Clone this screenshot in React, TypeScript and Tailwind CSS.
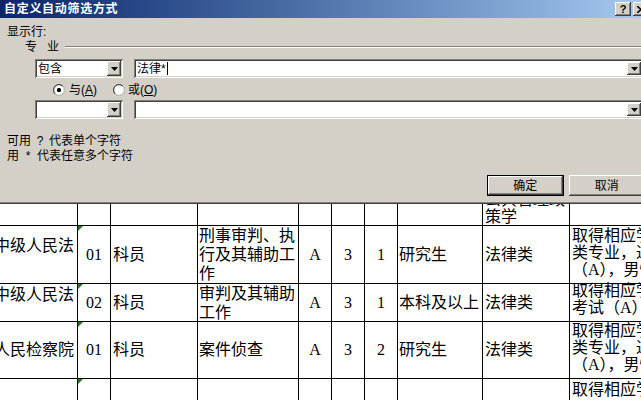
import React from "react";

const raised =
  "bg-[#d4d0c8] shadow-[inset_-1px_-1px_0_#404040,inset_1px_1px_0_#ffffff,inset_-2px_-2px_0_#808080,inset_2px_2px_0_#d4d0c8]";
const sunken =
  "bg-white shadow-[inset_1px_1px_0_#808080,inset_-1px_-1px_0_#ffffff,inset_2px_2px_0_#404040,inset_-2px_-2px_0_#d4d0c8]";

function DropBtn({ h = "h-[15px]" }: { h?: string }) {
  return (
    <div className={`w-[14px] ${h} ${raised} flex items-center justify-center shrink-0`}>
      <svg width="7" height="4" viewBox="0 0 7 4">
        <path d="M0 0h7L3.5 4z" fill="#000" />
      </svg>
    </div>
  );
}

function Combo({ text }: { text?: string }) {
  return (
    <div className={`w-[88px] h-[19px] ${sunken} flex items-center justify-between pl-[3px] pr-[2px]`}>
      <span className="text-[12px] leading-[12px]">{text}</span>
      <DropBtn />
    </div>
  );
}

function Field({ children }: { children?: React.ReactNode }) {
  return (
    <div className={`ml-[11px] w-[509px] h-[19px] ${sunken} flex items-center justify-between pl-[3px] pr-[2px]`}>
      <span className="text-[12px] leading-[12px] flex items-center">{children}</span>
      <DropBtn h="h-[13px]" />
    </div>
  );
}

function Radio({ checked }: { checked?: boolean }) {
  return (
    <svg width="12" height="12" viewBox="0 0 12 12" className="shrink-0">
      <circle cx="6" cy="6" r="5.5" fill="#fff" stroke="#808080" />
      <path d="M2.2 9.8A5 5 0 0 1 9.8 2.2" fill="none" stroke="#404040" />
      <path d="M9.8 2.2A5 5 0 0 1 2.2 9.8" fill="none" stroke="#d4d0c8" />
      {checked && <rect x="4" y="4" width="4" height="4" rx="1.5" fill="#000" />}
    </svg>
  );
}

function Tri() {
  return (
    <div className="absolute top-0 left-0 w-0 h-0 border-t-[5px] border-r-[5px] border-t-[#1f7a1f] border-r-transparent" />
  );
}

const cell = "border-r border-b border-black overflow-hidden relative";

function Lines({ lines, cls }: { lines: string[]; cls: string }) {
  return (
    <div className={cls}>
      {lines.map((l, i) => (
        <div key={i} className="whitespace-nowrap">
          {l}
        </div>
      ))}
    </div>
  );
}

export default function App() {
  const center = `${cell} flex items-center justify-center`;
  const left = `${cell} flex items-center`;
  return (
    <div className="w-[641px] h-[400px] overflow-hidden bg-white relative">
      {/* Dialog */}
      <div className="w-[645px] font-['Liberation_Sans','Noto_Sans_CJK_SC',sans-serif] text-black">
        <div className="h-[18px] bg-linear-to-r from-[#0a246a] to-[#a6caf0] flex items-center justify-between pl-[4px]">
          <span className="text-white font-bold text-[12px] tracking-[0.7px] leading-[12px]">自定义自动筛选方式</span>
          <div className="flex items-center gap-[2px] mr-[-4px]">
            <div className={`w-[16px] h-[14px] ${raised} flex items-center justify-center text-[11px] font-bold leading-none`}>?</div>
            <div className={`w-[16px] h-[14px] ${raised} flex items-center justify-center`}>
              <svg width="8" height="7" viewBox="0 0 8 7">
                <path d="M0 0l8 7M8 0L0 7" stroke="#000" strokeWidth="1.6" />
              </svg>
            </div>
          </div>
        </div>
        <div className="h-[186px] bg-[#d4d0c8] shadow-[inset_0_-1px_0_#404040,inset_0_-2px_0_#808080] pt-[7px] text-[12px]">
          <div className="pl-[7px] leading-[14px] h-[14px]">显示行:</div>
          <div className="h-[14px] flex items-center pl-[25px] mt-[1px]">
            <span className="leading-[14px] tracking-[10px]">专业</span>
            <div className="flex-1 ml-[-4px] h-[2px] border-t border-b border-t-[#808080] border-b-white" />
          </div>
          <div className="flex items-center pl-[35px] mt-[5px]">
            <Combo text="包含" />
            <Field>
              法律*<span className="inline-block w-[1px] h-[13px] bg-black ml-[1px]" />
            </Field>
          </div>
          <div className="flex items-center pl-[53px] mt-[6px] h-[12px] leading-[12px]">
            <Radio checked />
            <span className="ml-[4px]">
              与(<span className="underline">A</span>)
            </span>
            <span className="ml-[16px] flex items-center">
              <Radio />
              <span className="ml-[3px]">
                或(<span className="underline">O</span>)
              </span>
            </span>
          </div>
          <div className="flex items-center pl-[35px] mt-[4px]">
            <Combo />
            <Field />
          </div>
          <div className="pl-[7px] mt-[15px] leading-[15px]">
            <div className="whitespace-nowrap">
              可用<span className="inline-block w-[18px] text-center">?</span>代表单个字符
            </div>
            <div className="whitespace-nowrap">
              用<span className="inline-block w-[18px] text-center">*</span>代表任意多个字符
            </div>
          </div>
          <div className="flex pl-[487px] gap-[5px] mt-[11px]">
            <div className="w-[78px] h-[21px] border border-black flex">
              <div className={`flex-1 ${raised} flex items-center justify-center`}>确定</div>
            </div>
            <div className={`w-[78px] h-[21px] ${raised} flex items-center justify-center`}>取消</div>
          </div>
        </div>
      </div>

      {/* Spreadsheet */}
      <div className="grid grid-cols-[78px_33px_87px_101px_33px_33px_33px_85px_87px_200px] grid-rows-[22px_58px_38px_57px_40px] text-[16px] font-['Liberation_Serif','Noto_Sans_CJK_SC',serif] text-black">
        {/* row 0 */}
        <div className={cell} />
        <div className={cell} />
        <div className={cell} />
        <div className={cell} />
        <div className={cell} />
        <div className={cell} />
        <div className={cell} />
        <div className={cell} />
        <div className={`${cell} flex flex-col justify-end pl-[2px] leading-[17px]`}>
          <div className="whitespace-nowrap">公共管理政</div>
          <div className="whitespace-nowrap">策学</div>
        </div>
        <div className={cell} />

        {/* row 1 */}
        <div className={`${cell} flex justify-end pr-[3px] pt-[10px] leading-[19px] whitespace-nowrap`}>中级人民法</div>
        <div className={center}>
          <Tri />
          01
        </div>
        <div className={`${left} pl-[2px]`}>科员</div>
        <div className={`${left} pl-[1px]`}>
          <Lines lines={["刑事审判、执", "行及其辅助工", "作"]} cls="leading-[19px]" />
        </div>
        <div className={center}>A</div>
        <div className={center}>3</div>
        <div className={center}>1</div>
        <div className={`${left} pl-[1px]`}>研究生</div>
        <div className={`${left} pl-[2px]`}>法律类</div>
        <div className={`${cell} pl-[2px] pt-[1px]`}>
          <Lines lines={["取得相应学历", "类专业，通过", "（A），男性"]} cls="leading-[17px]" />
        </div>

        {/* row 2 */}
        <div className={`${cell} flex justify-end pr-[3px] pt-[1px] leading-[19px] whitespace-nowrap`}>中级人民法</div>
        <div className={center}>
          <Tri />
          02
        </div>
        <div className={`${left} pl-[2px]`}>科员</div>
        <div className={`${left} pl-[1px]`}>
          <Lines lines={["审判及其辅助", "工作"]} cls="leading-[19px]" />
        </div>
        <div className={center}>A</div>
        <div className={center}>3</div>
        <div className={center}>1</div>
        <div className={`${left} pl-[1px] whitespace-nowrap`}>本科及以上</div>
        <div className={`${left} pl-[2px]`}>法律类</div>
        <div className={`${cell} pl-[2px] mt-[-2px]`}>
          <Lines lines={["取得相应学历", "考试（A）"]} cls="leading-[17px]" />
        </div>

        {/* row 3 */}
        <div className={`${cell} flex items-center justify-end pr-[3px] whitespace-nowrap`}>人民检察院</div>
        <div className={center}>
          <Tri />
          01
        </div>
        <div className={`${left} pl-[2px]`}>科员</div>
        <div className={`${left} pl-[1px]`}>案件侦查</div>
        <div className={center}>A</div>
        <div className={center}>3</div>
        <div className={center}>2</div>
        <div className={`${left} pl-[1px]`}>研究生</div>
        <div className={`${left} pl-[2px]`}>法律类</div>
        <div className={`${cell} pl-[2px]`}>
          <Lines lines={["取得相应学历", "类专业，通过", "（A），男性"]} cls="leading-[17px]" />
        </div>

        {/* row 4 */}
        <div className={cell} />
        <div className={cell}>
          <Tri />
        </div>
        <div className={cell} />
        <div className={cell} />
        <div className={cell} />
        <div className={cell} />
        <div className={cell} />
        <div className={cell} />
        <div className={cell} />
        <div className={`${cell} pl-[2px] pt-[2px]`}>
          <Lines lines={["取得相应学历"]} cls="leading-[17px]" />
        </div>
      </div>
    </div>
  );
}
